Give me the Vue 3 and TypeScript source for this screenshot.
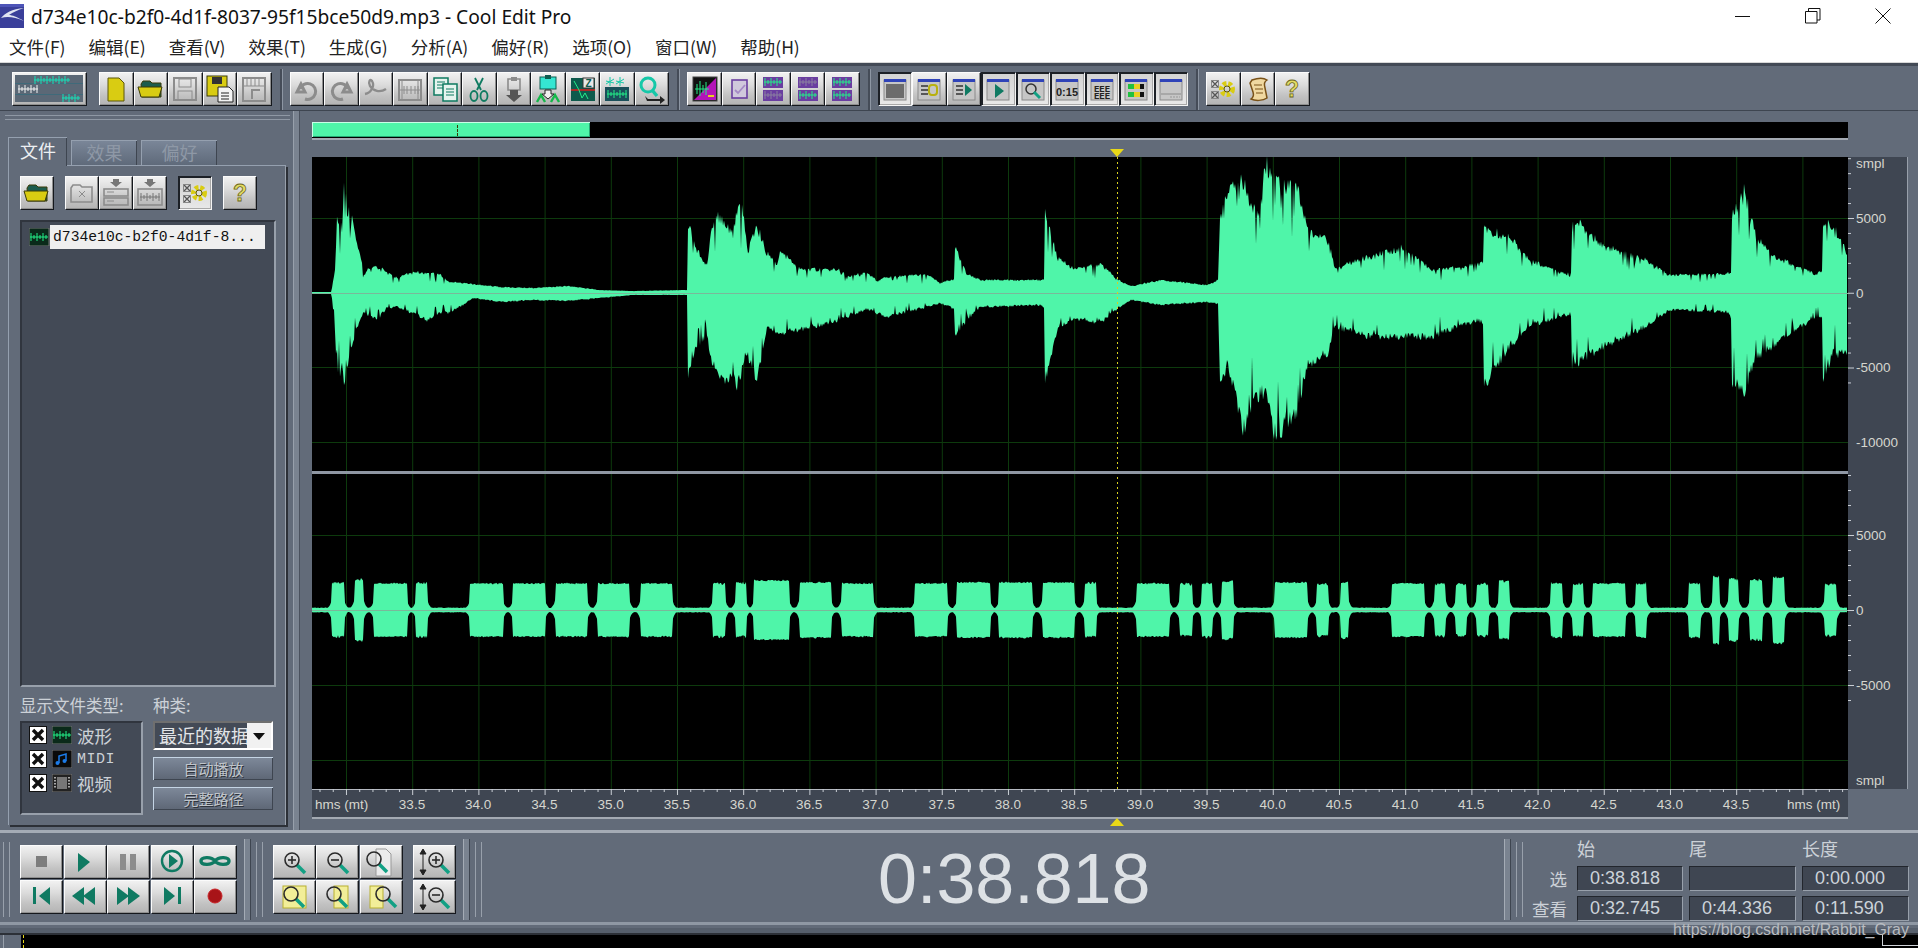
<script setup lang="ts">
interface Tool {
  icon: string;
  pressed?: boolean;
}

const PLOT_W = 1536
const CH1_ZERO = 136
const CH2_ZERO = 453

function rng(seed: number) {
  return () => {
    seed = (seed + 0x6d2b79f5) | 0
    let t = Math.imul(seed ^ (seed >>> 15), 1 | seed)
    t = (t + Math.imul(t ^ (t >>> 7), 61 | t)) ^ t
    return ((t ^ (t >>> 14)) >>> 0) / 4294967296
  }
}

// screen x, height above zero, depth below zero
const envelope: [number, number, number][] = [
  [312, 1, 1], [331, 1, 1], [332, 5, 5], [335, 23, 37], [337, 80, 83], [342, 67, 75], [345, 127, 92], [347, 83, 80],
  [350, 87, 63], [355, 57, 40], [362, 30, 25], [363, 17, 20], [368, 25, 22], [377, 28, 27], [387, 20, 15], [397, 15, 14],
  [413, 22, 20], [427, 20, 28], [440, 18, 20], [450, 11, 20], [463, 10, 12], [473, 9, 5], [500, 6, 9], [533, 5, 7],
  [567, 7, 8], [600, 3, 5], [633, 2, 2], [683, 3, 2], [687, 3, 2], [688, 70, 90], [692, 60, 63], [697, 43, 55],
  [707, 27, 42], [712, 67, 70], [717, 77, 80], [727, 68, 87], [733, 60, 80], [737, 85, 93], [742, 87, 80], [748, 43, 63],
  [757, 68, 90], [767, 40, 33], [777, 27, 43], [780, 43, 40], [800, 24, 37], [840, 23, 27], [847, 16, 24], [867, 21, 16],
  [877, 12, 20], [887, 16, 24], [927, 19, 14], [940, 10, 10], [950, 13, 14], [954, 14, 16], [955, 47, 44], [967, 19, 27],
  [980, 13, 14], [1041, 13, 12], [1044, 14, 14], [1045, 84, 91], [1057, 36, 37], [1074, 24, 26], [1101, 29, 30], [1117, 14, 16],
  [1131, 7, 7], [1161, 13, 12], [1208, 8, 9], [1218, 13, 11], [1220, 76, 91], [1228, 101, 71], [1243, 113, 136], [1258, 76, 104],
  [1266, 131, 97], [1275, 113, 144], [1298, 103, 117], [1308, 63, 71], [1328, 53, 61], [1335, 26, 34], [1368, 36, 44], [1402, 46, 44],
  [1432, 23, 44], [1478, 29, 27], [1483, 30, 30], [1484, 64, 94], [1509, 58, 54], [1529, 33, 34], [1565, 19, 22], [1571, 20, 24],
  [1572, 78, 74], [1602, 48, 54], [1646, 33, 34], [1669, 18, 17], [1726, 19, 19], [1731, 22, 24], [1732, 76, 91], [1744, 104, 99],
  [1756, 58, 64], [1776, 36, 51], [1816, 19, 24], [1822, 22, 26], [1823, 69, 84], [1833, 68, 61], [1848, 39, 61],
]

// measured on a 1568 px wide view of the plot, hence the 0.98
const bursts: [number, number, number][] = [
  [20, 33, 28], [43, 53, 32], [63, 97, 27], [106, 118, 28], [161, 195, 27], [205, 238, 27], [248, 281, 27], [291, 324, 27],
  [335, 368, 27], [409, 422, 28], [432, 443, 28], [451, 487, 30], [497, 530, 28], [540, 573, 27], [615, 648, 27], [658, 692, 28],
  [701, 735, 28], [745, 778, 28], [788, 800, 28], [841, 875, 27], [885, 898, 27], [908, 919, 28], [928, 940, 30], [982, 1016, 28],
  [1025, 1037, 27], [1050, 1058, 29], [1102, 1135, 27], [1145, 1157, 27], [1167, 1178, 27], [1188, 1200, 27], [1211, 1222, 30],
  [1264, 1276, 28], [1286, 1297, 27], [1307, 1340, 27], [1351, 1362, 28], [1405, 1417, 28], [1429, 1436, 35], [1445, 1456, 32],
  [1467, 1480, 31], [1490, 1503, 34], [1543, 1556, 27],
]

function envelopeAt(x: number, side: 1 | 2) {
  for (let i = 1; i < envelope.length; i++) {
    const a = envelope[i - 1]
    const b = envelope[i]
    if (x <= b[0]) return a[side] + (b[side] - a[side]) * (x - a[0]) / (b[0] - a[0])
  }
  return 1
}

function buildPath(zero: number, top: (x: number) => number, bottom: (x: number) => number) {
  const upper: string[] = []
  const lower: string[] = []
  for (let x = 0; x < PLOT_W; x++) {
    upper.push(`${x} ${(zero - top(x)).toFixed(1)}`)
    lower.unshift(`${x} ${(zero + bottom(x)).toFixed(1)}`)
  }
  return `M${upper.join('L')}L${lower.join('L')}Z`
}

function makeChannel1() {
  const rand = rng(7)
  const shake = (v: number) => {
    const deep = v > 14 && rand() > 0.86 ? 0.42 * rand() : 0
    return v * 1.07 * (1 - 0.16 * rand() - deep)
  }
  return buildPath(CH1_ZERO, x => shake(envelopeAt(x + 312, 1)), x => shake(envelopeAt(x + 312, 2)))
}

function makeChannel2() {
  const rand = rng(21)
  const level = (x: number) => {
    let edge = 2
    for (const [a, b, amp] of bursts) {
      const x0 = a * 0.98
      const x1 = b * 0.98
      if (x >= x0 && x <= x1) {
        const wide = x1 - x0 > 20
        return wide ? amp - rand() * 1.5 : amp - rand() * 3
      }
      const d = x < x0 ? x0 - x : x - x1
      edge = Math.max(edge, 9 * Math.exp(-d / 2.5))
    }
    return edge
  }
  return buildPath(CH2_ZERO, x => level(x) + rand() * 0.6, x => level(x) + rand() * 0.6)
}

const wave1 = makeChannel1()
const wave2 = makeChannel2()

const gridX: number[] = []
for (let i = 0; i < 23; i++) gridX.push(34.5 + i * 66.2)
const gridY = [61, 210, 285, 378, 528, 603]

const rulerTicks = (() => {
  let d = ''
  for (let i = -4; i < 12; i++) d += `M0 ${61.5 + i * 14.95}h${i % 5 === 0 ? 6 : 3}`
  for (let i = -4; i < 12; i++) d += `M0 ${378.5 + i * 15}h${i % 5 === 0 ? 6 : 3}`
  return d
})()

const timeTicks = (() => {
  let d = ''
  for (let i = 0; i < 117; i++) d += `M${8 + i * 13.24} 0v${i % 5 === 2 ? 6 : 3}`
  return d
})()

const timeLabels: { x: number; t: string }[] = []
for (let i = 0; i < 21; i++) timeLabels.push({ x: 100 + i * 66.2, t: (33.5 + i * 0.5).toFixed(1) })

const ampLabels = [
  { y: 11, t: 'smpl' }, { y: 66, t: '5000' }, { y: 141, t: '0' }, { y: 215, t: '-5000' }, { y: 290, t: '-10000' },
  { y: 383, t: '5000' }, { y: 458, t: '0' }, { y: 533, t: '-5000' }, { y: 628, t: 'smpl' },
]

const menus = ['文件(F)', '编辑(E)', '查看(V)', '效果(T)', '生成(G)', '分析(A)', '偏好(R)', '选项(O)', '窗口(W)', '帮助(H)']

// icon helpers: coordinates are button pixels
const G = '#8c8c8c'
const TEAL = '#0f7a62'
const YEL = '#d9cc12'

const miniWave = (x: number, y: number, c = '#22ee88', w = 18) => {
  let d = `M${x} ${y}h${w}`
  for (let i = 1; i < w; i += 3) d += `M${x + i} ${y - 2 - (i % 2) * 2}v${4 + (i % 2) * 4}`
  return `<path d="${d}" stroke="${c}" fill="none"/>`
}
const glass = (cx: number, cy: number, sign = '') => {
  let s = `<path d="M${cx + 5} ${cy + 5}l8 8" stroke="#12a084" stroke-width="3.5"/><circle cx="${cx}" cy="${cy}" r="7" fill="none" stroke="#2b2b2b" stroke-width="1.6"/>`
  if (sign) s += `<path d="M${cx - 4} ${cy}h8" stroke="#2b2b2b" stroke-width="1.6"/>`
  if (sign === '+') s += `<path d="M${cx} ${cy - 4}v8" stroke="#2b2b2b" stroke-width="1.6"/>`
  return s
}
const folderIcon = (body: string, back: string, edge: string) =>
  `<path d="M7 12l2-3h7l2 2h9v14H8z" fill="${back}" stroke="${edge}"/><path d="M4 15h19l5 0-3 10H7z" fill="${body}" stroke="${edge}"/>`
const gearIcon =
  `<circle cx="21" cy="17" r="5.500" fill="none" stroke="#d9cc12" stroke-width="5" stroke-dasharray="3.500 1.800"/><circle cx="21" cy="17" r="3" fill="none" stroke="#5d5608"/>` +
  `<path d="M6 9l6 6M12 9l-6 6M6 20l6 6M12 20l-6 6" stroke="#555" stroke-width="1.3"/><rect x="5.5" y="8.5" width="7" height="7" fill="none" stroke="#888"/><rect x="5.5" y="19.5" width="7" height="7" fill="none" stroke="#888"/>`
const helpIcon =
  `<text x="17" y="25" text-anchor="middle" font-family="Liberation Sans" font-weight="700" font-size="23" fill="#e3dc64" stroke="#6b6520" stroke-width=".8">?</text>`
const windowIcon = (inner: string) =>
  `<rect x="6" y="8" width="22" height="20" fill="#c6c6c6" stroke="#8a8a8a"/><rect x="6" y="7" width="22" height="3" fill="#2f43b8"/>${inner}`
const purplePanel = (a: string, b: string) =>
  `<rect x="7" y="5" width="20" height="11" fill="#6a3ea0"/><rect x="7" y="18" width="20" height="11" fill="#6a3ea0"/>${miniWave(8, 10, a)}${miniWave(8, 23, b)}`

const logoIcon =
  `<rect x="3" y="3" width="68" height="27" fill="#5b6876"/><path d="M3 11.5h68M3 22.5h68" stroke="#3f6a7a"/>` +
  miniWave(22, 8, '#16e0b8', 36) + miniWave(6, 17, '#f4f4f4', 20) + miniWave(50, 26, '#16e0b8', 18)

const group1: Tool[] = [
  { icon: `<path d="M9 6h11l5 5v18H9z" fill="${YEL}" stroke="#5b5608"/>` },
  { icon: folderIcon(YEL, '#1c5c4e', '#3a3a08') },
  { icon: `<rect x="6" y="6" width="22" height="22" fill="none" stroke="${G}" stroke-width="2"/><rect x="11" y="7" width="12" height="8" fill="none" stroke="${G}"/><rect x="10" y="19" width="14" height="9" fill="none" stroke="${G}"/>` },
  { icon: `<rect x="4" y="4" width="20" height="20" fill="${YEL}" stroke="#3a3a08"/><rect x="9" y="5" width="10" height="7" fill="#333"/><path d="M15 15h11l4 4v11H15z" fill="#f4f4f4" stroke="#222"/><path d="M18 21h8M18 24h8M18 27h8" stroke="#222"/>` },
  { icon: `<rect x="6" y="6" width="22" height="23" fill="none" stroke="${G}" stroke-width="2"/><path d="M10 7v7M14 7v7M18 7v7M22 7v7M7 14h20" stroke="${G}"/><path d="M15 27v-9h8" fill="none" stroke="${G}" stroke-width="2"/>` },
]

const group2: Tool[] = [
  { icon: `<path d="M11 12l-4 8 8 0zM10 17a8 8 0 1 1 5 10" fill="none" stroke="${G}" stroke-width="3"/>` },
  { icon: `<path d="M23 12l4 8-8 0zM24 17a8 8 0 1 0-5 10" fill="none" stroke="${G}" stroke-width="3"/>` },
  { icon: `<path d="M6 22c6-1 10-8 7-13-2-3-4 1-2 5 3 5 10 7 16 3" fill="none" stroke="${G}" stroke-width="2.4"/>` },
  { icon: `<rect x="6" y="8" width="22" height="20" fill="none" stroke="${G}" stroke-width="2"/><path d="M5 18h24M11 14v8M14 14v8M18 14v8M22 14v8M25 14v8" stroke="${G}"/><path d="M9 8v20M25 8v20" stroke="${G}"/>` },
  { icon: `<rect x="6" y="6" width="14" height="17" fill="#e6f4ee" stroke="#0e7a60" stroke-width="1.5"/><path d="M9 10h8M9 13h8M9 16h8" stroke="#0e7a60"/><rect x="15" y="12" width="14" height="17" fill="#e6f4ee" stroke="#0e7a60" stroke-width="1.5"/><path d="M18 17h8M18 20h8M18 23h8" stroke="#0e7a60"/>` },
  { icon: `<path d="M13 6l6 12M21 6l-6 12" stroke="#0e7a60" stroke-width="1.8"/><ellipse cx="12" cy="24" rx="3.5" ry="5" fill="none" stroke="#0e7a60" stroke-width="1.8"/><ellipse cx="22" cy="24" rx="3.5" ry="5" fill="none" stroke="#0e7a60" stroke-width="1.8"/>` },
  { icon: `<path d="M11 7h12v11H11z" fill="none" stroke="${G}" stroke-width="1.6"/><rect x="14" y="5" width="6" height="4" fill="${G}"/><path d="M13 18h8v5h4l-8 7-8-7h4z" fill="#555"/>` },
  { icon: `<rect x="9" y="5" width="16" height="12" fill="#35e6d2" stroke="#0f5c50"/><rect x="14" y="3" width="6" height="4" fill="#0f5c50"/><path d="M14 18h6v4h3l-6 5-6-5h3z" fill="#f0f0f0" stroke="#222"/><path d="M6 30l4-7 4 7M20 30l4-7 4 7" fill="none" stroke="#15b84a" stroke-width="2.4"/>` },
  { icon: `<rect x="5" y="6" width="24" height="23" fill="#0e5a4c"/><path d="M5 18h24" stroke="#d21f1f" stroke-width="1.6"/><path d="M8 9l5 9 3 8 3-5 3 6" fill="none" stroke="#22ee88"/><rect x="17" y="6" width="11" height="10" fill="#e8e8e8" stroke="#333"/><text x="22.5" y="15" text-anchor="middle" font-family="Liberation Sans" font-weight="700" font-size="10" fill="#0e5a4c">Z</text>` },
  { icon: `<rect x="5" y="15" width="24" height="14" fill="#1a4f5a"/>${miniWave(7, 22, '#22ee88', 20)}<path d="M10 5v9M6 9l8 2M14 7l-8 5M20 5v9M16 9l8 2M24 7l-8 5" stroke="#16c8a8"/>` },
  { icon: `<circle cx="13" cy="13" r="7" fill="none" stroke="#16c8a8" stroke-width="3"/><path d="M17 18l5 6" stroke="#16c8a8" stroke-width="3.4"/><path d="M10 24l3 3h12v-3l5 4-5 4v-3H12z" fill="#222"/>` },
]

const group3: Tool[] = [
  { icon: `<rect x="6" y="5" width="24" height="24" fill="#111" stroke="#444"/><path d="M7 28L29 6v22z" fill="#b414b8"/><path d="M8 17h14M10 12v10M13 9v15M16 13v8M19 10v13" stroke="#22ee88"/><rect x="21" y="23" width="6" height="2" fill="#e8d020"/>` },
  { icon: `<rect x="10" y="8" width="15" height="18" fill="#d0c8dc" stroke="#6a3ea0" stroke-width="1.6"/><path d="M13 18l3 3 7-8" fill="none" stroke="#a58ac6" stroke-width="1.8"/>` },
  { icon: purplePanel('#22ee88', '#8a80a0') },
  { icon: purplePanel('#8a80a0', '#22ee88') },
  { icon: purplePanel('#22ee88', '#22ee88') },
]

const group4: Tool[] = [
  { pressed: true, icon: windowIcon(`<rect x="8" y="12" width="18" height="14" fill="#6c6c6c"/>`) },
  { icon: windowIcon(`<path d="M9 14h7M9 18h7M9 22h7" stroke="#333" stroke-width="1.5"/><rect x="17" y="13" width="8" height="10" rx="3" fill="none" stroke="#b8b010" stroke-width="2"/>`) },
  { icon: windowIcon(`<path d="M9 14h7M9 18h7M9 22h7" stroke="#333" stroke-width="1.5"/><path d="M18 12l7 6-7 6z" fill="${TEAL}"/>`) },
  { pressed: true, icon: windowIcon(`<path d="M14 12l9 7-9 7z" fill="${TEAL}"/>`) },
  { pressed: true, icon: windowIcon(`<circle cx="15" cy="17" r="5" fill="none" stroke="#333" stroke-width="1.5"/><path d="M18 20l6 6" stroke="#12a084" stroke-width="3"/>`) },
  { pressed: true, icon: windowIcon(`<text x="17" y="24" text-anchor="middle" font-family="Liberation Sans" font-weight="700" font-size="11" fill="#222">0:15</text>`) },
  { pressed: true, icon: windowIcon(`<text x="17" y="20" text-anchor="middle" font-family="Liberation Mono" font-weight="700" font-size="9" fill="#222">EEE</text><text x="17" y="27" text-anchor="middle" font-family="Liberation Mono" font-weight="700" font-size="9" fill="#222">EEE</text>`) },
  { pressed: true, icon: windowIcon(`<rect x="9" y="12" width="16" height="5" fill="#20c040"/><rect x="15" y="12" width="6" height="5" fill="#e8d020"/><rect x="21" y="12" width="4" height="5" fill="#111"/><rect x="9" y="20" width="16" height="5" fill="#20c040"/><rect x="15" y="20" width="6" height="5" fill="#e8d020"/><rect x="21" y="20" width="4" height="5" fill="#111"/>`) },
  { pressed: true, icon: windowIcon(`<path d="M7 22h20" stroke="#8a8a8a"/><path d="M16 25h10" stroke="#999" stroke-dasharray="2 1"/>`) },
]

const scrollIcon = `<path d="M11 8c6-2 12-2 15 0-3 2-3 4-2 8l2 10c-4 3-12 3-16 1 3-2 3-4 2-7L9 11z" fill="#f0d8a0" stroke="#7a5218" stroke-width="1.5"/><path d="M13 13h8M14 17h8M15 21h7" stroke="#7a5218"/>`

const group5: Tool[] = [{ icon: gearIcon }, { icon: scrollIcon }, { icon: helpIcon }]

const panelTools: { icon: string; pressed?: boolean; gap?: boolean }[] = [
  { icon: folderIcon(YEL, '#1c5c4e', '#3a3a08'), gap: true },
  { icon: `<path d="M6 12l2-3h7l2 2h10v15H6z" fill="none" stroke="${G}" stroke-width="1.6"/><path d="M14 15l6 6M20 15l-6 6" stroke="${G}"/>` },
  { icon: `<path d="M14 3h6v3h3l-6 5-6-5h3z" fill="#777"/><rect x="5" y="13" width="24" height="7" fill="none" stroke="${G}" stroke-width="1.6"/><rect x="5" y="22" width="24" height="7" fill="none" stroke="${G}" stroke-width="1.6"/><path d="M8 16h7M8 25h7" stroke="${G}"/>` },
  { icon: `<path d="M14 3h6v3h3l-6 5-6-5h3z" fill="#777"/><rect x="5" y="13" width="24" height="16" fill="none" stroke="${G}" stroke-width="1.6"/>${miniWave(7, 21, '#777', 20)}`, gap: true },
  { pressed: true, icon: gearIcon, gap: true },
  { icon: helpIcon },
]

const midiIcon = `<rect width="20" height="18" fill="#0a0a0a" stroke="#777"/><path d="M7 13V6l7-2v7" fill="none" stroke="#1c7be8" stroke-width="1.5"/><circle cx="5.5" cy="13" r="2" fill="#1c7be8"/><circle cx="12.5" cy="11" r="2" fill="#1c7be8"/>`
const waveIcon = `<rect width="20" height="18" fill="#0a2a1a" stroke="#777"/>${miniWave(1, 9, '#22ee88', 18)}`
const filmIcon = `<rect width="20" height="18" fill="#222" stroke="#777"/><rect x="5" y="3" width="10" height="12" fill="#777"/><path d="M3 3v12M17 3v12" stroke="#aaa" stroke-dasharray="1.5 1.5" stroke-width="2"/>`

const fileTypes = [
  { label: '波形', icon: waveIcon, mono: false },
  { label: 'MIDI', icon: midiIcon, mono: true },
  { label: '视频', icon: filmIcon, mono: false },
]

const tri = (pts: string, c = TEAL) => `<polygon points="${pts}" fill="${c}"/>`
const transport: string[] = [
  `<rect x="16" y="11" width="11" height="11" fill="#7d7d7d"/>`,
  tri('14,8 26,17 14,27'),
  `<rect x="13" y="9" width="6" height="16" fill="#8c8c8c"/><rect x="23" y="9" width="6" height="16" fill="#8c8c8c"/>`,
  `<circle cx="21" cy="16" r="10" fill="none" stroke="${TEAL}" stroke-width="2.4"/>${tri('18,9 27,16 18,23')}`,
  `<path d="M21 16c-4-5-14-4-14 0s10 5 14 0c4-5 14-4 14 0s-10 5-14 0z" fill="none" stroke="${TEAL}" stroke-width="3.4"/>`,
  `<rect x="13" y="7" width="3" height="17" fill="${TEAL}"/>${tri('30,7 19,16 30,25')}`,
  `${tri('20,7 8,16 20,25')}${tri('31,7 19,16 31,25')}`,
  `${tri('10,7 22,16 10,25')}${tri('21,7 33,16 21,25')}`,
  `${tri('13,7 24,16 13,25')}<rect x="27" y="7" width="3" height="17" fill="${TEAL}"/>`,
  `<circle cx="21" cy="16" r="7" fill="#a81418" stroke="#c92428"/>`,
]

const yellowPatch = (x: number, w: number) => `<rect x="${x}" y="6" width="${w}" height="22" fill="#f2ee98" stroke="#b8b030"/>`
const zoomTools: string[] = [
  glass(19, 15, '+'),
  glass(19, 15, '-'),
  `<path d="M16 4h10l5 5v22H16z" fill="#ececec" stroke="#999"/>${glass(14, 14)}`,
  `${yellowPatch(10, 23)}${glass(18, 14)}`,
  `${yellowPatch(18, 14)}${glass(18, 14)}`,
  `${yellowPatch(10, 13)}${glass(23, 14)}`,
]
const vTools: string[] = [
  `<path d="M10 5v24M10 4l-3 5h6zM10 30l-3-5h6z" stroke="#222" fill="#222"/>${glass(23, 15, '+')}`,
  `<path d="M10 5v24M10 4l-3 5h6zM10 30l-3-5h6z" stroke="#222" fill="#222"/>${glass(23, 15, '-')}`,
]

const selection = [
  { label: '选', cells: ['0:38.818', '', '0:00.000'] },
  { label: '查看', cells: ['0:32.745', '0:44.336', '0:11.590'] },
]
</script>

<template>
  <div class="app">
    <header class="titlebar">
      <svg class="app-icon" width="24" height="24">
        <rect width="24" height="24" fill="#3a3f9a" />
        <path d="M24 4C12 5 5 9 1 14c6-2 14-1 23 3-7-4-12-6-15-6 4-3 9-5 15-7z" fill="#dfe3f2" />
        <path d="M0 0h24v3H0z" fill="#4e55b8" />
      </svg>
      <span class="title">d734e10c-b2f0-4d1f-8037-95f15bce50d9.mp3 - Cool Edit Pro</span>
      <div class="win-buttons">
        <svg width="16" height="16"><path d="M0 8.500h15" stroke="#111" /></svg>
        <svg width="16" height="16"><path d="M.5 3.500h11.500v11.500h-11.500zM3.500 3.500v-3h11.500v11.500h-3" fill="none" stroke="#111" /></svg>
        <svg width="16" height="16"><path d="M.5.5l15 15M15.500.5l-15 15" stroke="#111" /></svg>
      </div>
    </header>

    <nav class="menubar">
      <span v-for="m in menus" :key="m" class="menu-item">{{ m }}</span>
    </nav>

    <section class="toolbar">
      <div class="tb-group first">
        <div class="btn logo"><svg v-html="logoIcon" /></div>
        <div v-for="(t, i) in group1" :key="i" class="btn tb"><svg v-html="t.icon" /></div>
      </div>
      <div class="tb-group">
        <div v-for="(t, i) in group2" :key="i" class="btn tb"><svg v-html="t.icon" /></div>
      </div>
      <div class="tb-group">
        <div v-for="(t, i) in group3" :key="i" class="btn tb"><svg v-html="t.icon" /></div>
      </div>
      <div class="tb-group">
        <div v-for="(t, i) in group4" :key="i" class="btn tb" :class="{ pressed: t.pressed }"><svg v-html="t.icon" /></div>
      </div>
      <div class="tb-group">
        <div v-for="(t, i) in group5" :key="i" class="btn tb"><svg v-html="t.icon" /></div>
      </div>
    </section>

    <main class="main">
      <aside class="left">
        <div class="h-grip" />
        <div class="tabs">
          <span class="tab active">文件</span>
          <span class="tab">效果</span>
          <span class="tab wide">偏好</span>
        </div>
        <div class="panel">
          <div class="panel-tools">
            <div
              v-for="(t, i) in panelTools"
              :key="i"
              class="btn ptool"
              :class="{ pressed: t.pressed, gap: t.gap }"
            >
              <svg v-html="t.icon" />
            </div>
          </div>
          <div class="file-list">
            <div class="file-row">
              <svg class="file-icon" width="21" height="18" v-html="waveIcon" />
              <span class="file-name">d734e10c-b2f0-4d1f-8...</span>
            </div>
          </div>
          <div class="panel-bottom">
            <div class="types">
              <div class="cap">显示文件类型:</div>
              <div class="type-box">
                <div v-for="f in fileTypes" :key="f.label" class="type-row">
                  <svg class="check" width="18" height="18">
                    <rect width="18" height="18" fill="#fff" stroke="#111" stroke-width="2" />
                    <path d="M4 4l10 10M14 4L4 14" stroke="#111" stroke-width="3.4" />
                  </svg>
                  <svg class="type-icon" width="20" height="18" v-html="f.icon" />
                  <span :class="{ mono: f.mono }">{{ f.label }}</span>
                </div>
              </div>
            </div>
            <div class="kinds">
              <div class="cap">种类:</div>
              <div class="combo">
                <span class="combo-text">最近的数据</span>
                <span class="combo-arrow"><svg width="14" height="8"><path d="M1 1h12L7 8z" fill="#111" /></svg></span>
              </div>
              <div class="flat-btn">自动播放</div>
              <div class="flat-btn">完整路径</div>
            </div>
          </div>
        </div>
      </aside>

      <div class="v-split" />

      <div class="right">
        <div class="overview">
          <div class="overview-fill"><i class="overview-mark" /></div>
        </div>
        <svg class="marker" width="14" height="8"><path d="M0 0h14L7 8z" fill="#e8d818" /></svg>
        <div class="plot-row">
          <svg class="plot" :width="PLOT_W" height="632">
            <rect :width="PLOT_W" height="632" fill="#000" />
            <path v-for="x in gridX" :key="x" :d="`M${x} 0v632`" stroke="#0d3a0d" />
            <path v-for="y in gridY" :key="y" :d="`M0 ${y + 0.5}h${PLOT_W}`" stroke="#0d3a0d" />
            <path :d="wave1" fill="#4ff5a9" />
            <path :d="wave2" fill="#4ff5a9" />
            <path :d="`M0 ${CH1_ZERO + 0.5}h${PLOT_W}M0 ${CH2_ZERO + 0.5}h${PLOT_W}`" stroke="#7ab89a" />
            <path d="M805.500 0v632" stroke="#d8d020" stroke-dasharray="2 3" />
            <rect y="314" :width="PLOT_W" height="3" fill="#8f97a3" />
          </svg>
          <svg class="amp-ruler" width="59" height="632">
            <path :d="rulerTicks" stroke="#c9ced4" />
            <text v-for="l in ampLabels" :key="l.y" x="8" :y="l.y" class="ruler-text">{{ l.t }}</text>
          </svg>
        </div>
        <svg class="time-ruler" :width="PLOT_W" height="28">
          <path d="M0 .5h1536" stroke="#b4b9c0" />
          <path :d="timeTicks" stroke="#c9ced4" />
          <text x="3" y="20" class="ruler-text">hms (mt)</text>
          <text v-for="l in timeLabels" :key="l.t" :x="l.x" y="20" class="ruler-text" text-anchor="middle">{{ l.t }}</text>
          <text x="1475" y="20" class="ruler-text">hms (mt)</text>
        </svg>
        <svg class="marker low" width="14" height="8"><path d="M0 8h14L7 0z" fill="#e8d818" /></svg>
      </div>
    </main>

    <section class="transport">
      <div class="grip" />
      <div class="t-grid five">
        <div v-for="(t, i) in transport" :key="i" class="btn wide-btn"><svg v-html="t" /></div>
      </div>
      <div class="t-bar" />
      <div class="grip" />
      <div class="t-grid three">
        <div v-for="(t, i) in zoomTools" :key="i" class="btn wide-btn"><svg v-html="t" /></div>
      </div>
      <div class="t-grid one">
        <div v-for="(t, i) in vTools" :key="i" class="btn wide-btn"><svg v-html="t" /></div>
      </div>
      <div class="t-bar" />
      <div class="grip" />
      <div class="clock">0:38.818</div>
      <div class="t-bar" />
      <div class="grip" />
      <div class="sel-table">
        <span />
        <span class="sel-head">始</span>
        <span class="sel-head">尾</span>
        <span class="sel-head">长度</span>
        <template v-for="r in selection" :key="r.label">
          <span class="sel-label">{{ r.label }}</span>
          <span v-for="(c, i) in r.cells" :key="i" class="sel-cell">{{ c }}</span>
        </template>
      </div>
    </section>

    <footer class="strip">
      <div class="strip-grip" />
      <div class="strip-track">
        <i class="strip-mark" />
        <i class="strip-corner" />
      </div>
    </footer>

    <span class="watermark">https://blog.csdn.net/Rabbit_Gray</span>
  </div>
</template>

<style>
html,
body {
  margin: 0;
  background: #626b79;
  overflow: hidden;
}
</style>

<style scoped>
.app {
  position: relative;
  width: 1918px;
  height: 948px;
  overflow: hidden;
  background: #626b79;
  font-family: "Liberation Sans", "Noto Sans CJK SC", sans-serif;
  color: #d4d8dd;
}

.titlebar {
  display: flex;
  align-items: center;
  height: 32px;
  background: #fff;
  color: #111;
}

.app-icon {
  margin: 0 7px 0 0;
  flex: none;
}

.title {
  font-family: "Noto Sans", "Noto Sans CJK SC", sans-serif;
  font-size: 19.2px;
  white-space: nowrap;
}

.win-buttons {
  margin-left: auto;
  display: flex;
  gap: 54px;
  padding-right: 27px;
}

.menubar {
  display: flex;
  align-items: center;
  gap: 23px;
  box-sizing: border-box;
  height: 31px;
  padding: 0 0 2px 9px;
  background: #fff;
  color: #222;
  font-family: "Noto Sans CJK SC", sans-serif;
  font-size: 17.5px;
}

.menu-item {
  white-space: nowrap;
}

.toolbar {
  display: flex;
  height: 48px;
  padding-top: 3px;
  box-sizing: border-box;
  border-top: 3px solid #434a56;
  box-shadow: 0 -1px 0 #d8d8d8, inset 0 -1px 0 #3e4550;
}

.tb-group {
  display: flex;
  padding: 3px 8px 0;
  height: 41px;
  border-left: 2px solid #454c58;
  box-shadow: inset 1px 0 0 #8d96a3;
  box-sizing: border-box;
}

.tb-group.first {
  border-left: 0;
  box-shadow: none;
  padding-left: 12px;
}

.btn {
  flex: none;
  background: linear-gradient(180deg, #f3f3f3 0%, #dcdcdc 38%, #c2c2c2 72%, #b4b4b4 100%);
  box-shadow: inset 1px 1px 0 #fbfbfb, inset -1px -1px 0 #8f8f8f, 1px 1px 0 #15181d;
}

.btn svg {
  display: block;
  width: 100%;
  height: 100%;
}

.btn.pressed {
  background: linear-gradient(180deg, #d2d2d2 0%, #e8e8e8 100%);
  box-shadow: inset 2px 2px 0 #1c2026, inset -1px -1px 0 #a8a8a8, 1px 1px 0 #f4f4f4;
}

.tb {
  width: 33.5px;
  height: 33px;
  margin-right: 1px;
}

.logo {
  width: 74px;
  height: 33px;
  margin-right: 13px;
}

.main {
  display: flex;
  height: 719px;
}

.left {
  width: 293px;
  flex: none;
  box-sizing: border-box;
  padding: 4px 0 0 8px;
}

.h-grip {
  height: 3px;
  margin: 0 3px 17px -3px;
  border-top: 1px solid #8f98a4;
  border-bottom: 1px solid #8f98a4;
}

.tabs {
  display: flex;
  align-items: flex-end;
  gap: 4px;
  height: 28px;
  font-family: "Noto Sans CJK SC", sans-serif;
}

.tab {
  width: 66px;
  height: 25px;
  line-height: 22px;
  text-align: center;
  font-size: 18px;
  box-sizing: border-box;
  color: #8e98a6;
  background: linear-gradient(180deg, #7a8698, #5f6a7a);
  border-top: 1px solid #95a0af;
  border-left: 1px solid #95a0af;
  box-shadow: inset -1px 0 0 #3e4550;
}

.tab.wide {
  width: 76px;
}

.tab.active {
  width: 59px;
  height: 29px;
  line-height: 24px;
  color: #eceff2;
  background: #626b79;
  margin-bottom: -1px;
  position: relative;
  z-index: 1;
}

.panel {
  box-sizing: border-box;
  width: 278px;
  height: 660px;
  padding: 10px 0 0 11px;
  border-top: 1px solid #95a0af;
  border-left: 1px solid #95a0af;
  box-shadow: inset -1px 0 0 #98a0ab, 2px 2px 0 #2c3037;
}

.panel-tools {
  display: flex;
  height: 33px;
}

.ptool {
  width: 33px;
  height: 33px;
  margin-right: 1px;
}

.ptool.gap {
  margin-right: 12px;
}

.file-list {
  box-sizing: border-box;
  width: 256px;
  height: 467px;
  margin-top: 11px;
  padding: 3px 9px 0 7px;
  background: #434a56;
  border-top: 2px solid #30353e;
  border-left: 2px solid #30353e;
  border-right: 2px solid #98a0ab;
  border-bottom: 2px solid #98a0ab;
}

.file-row {
  display: flex;
  align-items: center;
}

.file-icon {
  flex: none;
}

.file-name {
  flex: 1;
  height: 24px;
  line-height: 24px;
  padding-left: 3px;
  background: #efefef;
  color: #111;
  font-family: "Liberation Mono", monospace;
  font-size: 14.7px;
  white-space: nowrap;
  overflow: hidden;
}

.panel-bottom {
  display: flex;
  gap: 10px;
  margin-top: 10px;
}

.cap {
  height: 24px;
  line-height: 17px;
  font-size: 16.5px;
  color: #ccd1d7;
  font-family: "Noto Sans CJK SC", sans-serif;
  white-space: nowrap;
}

.types {
  width: 123px;
}

.type-box {
  box-sizing: border-box;
  height: 94px;
  background: #434a56;
  border-top: 2px solid #30353e;
  border-left: 2px solid #30353e;
  border-right: 2px solid #98a0ab;
  border-bottom: 2px solid #98a0ab;
}

.type-row {
  display: flex;
  align-items: center;
  height: 24px;
  padding-left: 7px;
  gap: 5px;
  font-size: 17.5px;
  color: #ccd1d7;
  font-family: "Noto Sans CJK SC", sans-serif;
}

.type-row .mono {
  font-family: "Liberation Mono", monospace;
  font-size: 15px;
  letter-spacing: 0.5px;
}

.check,
.type-icon {
  flex: none;
}

.kinds {
  width: 120px;
}

.combo {
  display: flex;
  box-sizing: border-box;
  height: 29px;
  background: #434a56;
  border-top: 2px solid #6f6f6f;
  border-left: 2px solid #6f6f6f;
  border-right: 2px solid #fff;
  border-bottom: 2px solid #fff;
}

.combo-text {
  flex: 1;
  overflow: hidden;
  white-space: nowrap;
  padding-left: 4px;
  font-size: 18px;
  line-height: 25px;
  color: #e2e5e8;
  font-family: "Noto Sans CJK SC", sans-serif;
}

.combo-arrow {
  width: 24px;
  flex: none;
  display: flex;
  align-items: center;
  justify-content: center;
  background: #f1f1f1;
}

.flat-btn {
  box-sizing: border-box;
  height: 23px;
  margin-top: 7px;
  line-height: 21px;
  text-align: center;
  font-size: 15px;
  color: #c0c5cb;
  text-shadow: 1px 1px 0 #2f343c;
  font-family: "Noto Sans CJK SC", sans-serif;
  background: linear-gradient(180deg, #7d8899, #5d6675);
  border-top: 1px solid #c4d4e4;
  border-left: 1px solid #c4d4e4;
  box-shadow: inset -1px -1px 0 #3e4550;
}

.v-split {
  width: 7px;
  flex: none;
  background: #7a8390;
  border-left: 1px solid #98a0ab;
  border-right: 1px solid #4a515d;
  box-sizing: border-box;
}

.right {
  position: relative;
  flex: 1;
  padding: 11px 0 0 12px;
}

.overview {
  width: 1536px;
  height: 16px;
  background: #000;
  box-shadow: 0 2px 0 #a3a9b2;
}

.overview-fill {
  position: relative;
  width: 278px;
  height: 15px;
  background: #4ff5a9;
  border-top: 1px solid #c8ffe6;
  border-left: 1px solid #c8ffe6;
  box-sizing: border-box;
  box-shadow: inset -1px -1px 0 #25a874;
}

.overview-mark {
  position: absolute;
  left: 144px;
  top: 2px;
  height: 11px;
  border-left: 1px dashed #3a3a00;
}

.marker {
  display: block;
  margin: 11px 0 0 798px;
}

.plot-row {
  display: flex;
  height: 632px;
}

.plot,
.amp-ruler,
.time-ruler {
  display: block;
  flex: none;
}

.amp-ruler {
  background: #3f4652;
  box-shadow: 1px 0 0 #98a0ab;
}

.ruler-text {
  font-family: "Liberation Sans", sans-serif;
  font-size: 13.5px;
  fill: #d6d6cf;
}

.time-ruler {
  background: #3f4652;
  box-shadow: 0 2px 0 #a3a9b2;
}

.marker.low {
  margin: 1px 0 0 798px;
}

.transport {
  display: flex;
  align-items: stretch;
  box-sizing: border-box;
  height: 105px;
  padding: 6px 0 15px 3px;
  border-top: 3px solid #a4abb5;
  position: relative;
}

.transport::after {
  content: "";
  position: absolute;
  left: 0;
  right: 0;
  bottom: 0;
  height: 13px;
  border-top: 3px solid #8f98a4;
  box-shadow: inset 0 -2px 0 #2c3037, inset 0 -7px 0 #565f6c;
  box-sizing: border-box;
}

.grip {
  width: 7px;
  flex: none;
  box-sizing: border-box;
  border-left: 1px solid #98a0ab;
  border-right: 1px solid #98a0ab;
  margin: 3px 0;
}

.t-bar {
  width: 7px;
  flex: none;
  margin: 0 5px 0 6px;
  box-sizing: border-box;
  background: #7a8390;
  border-left: 1px solid #a4abb5;
  border-right: 1px solid #3e4550;
}

.t-grid {
  display: grid;
  grid-auto-rows: 35px;
  align-content: start;
  padding-top: 6px;
}

.t-grid.five {
  grid-template-columns: repeat(5, 43.5px);
  margin-left: 10px;
}

.t-grid.three {
  grid-template-columns: repeat(3, 43.5px);
  margin-left: 10px;
}

.t-grid.one {
  grid-template-columns: 43.5px;
  margin-left: 10px;
}

.wide-btn {
  width: 42px;
  height: 33px;
}

.clock {
  flex: 1;
  box-sizing: border-box;
  padding: 1px 0 0 49px;
  text-align: center;
  font-size: 70px;
  line-height: 78px;
  color: #dde1e5;
  white-space: nowrap;
}

.sel-table {
  display: grid;
  grid-template-columns: 48px 106px 107px 107px;
  column-gap: 6px;
  grid-template-rows: 24px 25px 25px;
  row-gap: 5px;
  margin-top: -2px;
  padding-right: 9px;
  font-family: "Noto Sans CJK SC", sans-serif;
}

.sel-head {
  font-size: 18px;
  line-height: 22px;
  color: #ccd1d7;
}

.sel-label {
  padding-right: 4px;
  font-size: 17.5px;
  line-height: 25px;
  text-align: right;
  color: #ccd1d7;
  white-space: nowrap;
}

.sel-cell {
  box-sizing: border-box;
  line-height: 23px;
  padding-left: 12px;
  font-family: "Liberation Sans", sans-serif;
  font-size: 18px;
  background: #3f4652;
  color: #ccd3da;
  border-top: 1px solid #22262d;
  border-left: 1px solid #22262d;
  border-right: 1px solid #98a0ab;
  border-bottom: 1px solid #98a0ab;
}

.strip {
  display: flex;
  height: 13px;
}

.strip-grip {
  width: 18px;
  flex: none;
  box-sizing: border-box;
  margin-left: 3px;
  border-left: 1px solid #98a0ab;
}

.strip-track {
  position: relative;
  flex: 1;
  background: #000;
}

.strip-mark {
  position: absolute;
  left: 2px;
  top: 0;
  height: 13px;
  border-left: 1px dashed #e8d818;
}

.strip-corner {
  position: absolute;
  right: 0;
  top: 0;
  width: 35px;
  height: 10px;
  border-left: 1px solid #cfd3d8;
  border-bottom: 1px solid #cfd3d8;
}

.watermark {
  position: absolute;
  left: 1673px;
  top: 921px;
  font-size: 15.9px;
  color: #b9bcc0;
  white-space: nowrap;
}
</style>
